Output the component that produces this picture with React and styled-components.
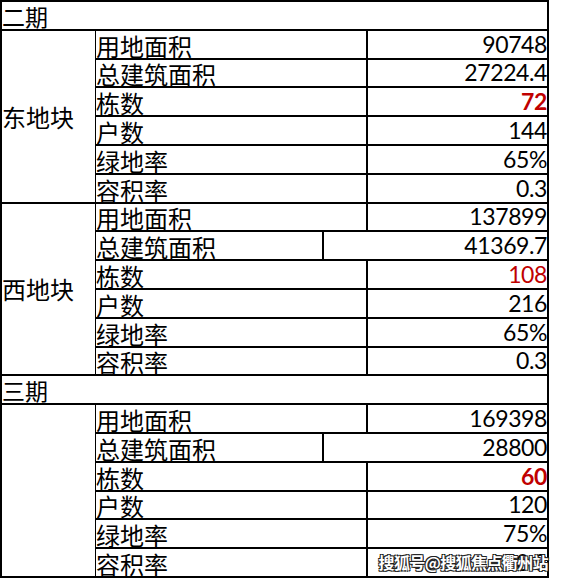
import React from 'react';
import styled, { createGlobalStyle } from 'styled-components';

const GlobalStyle = createGlobalStyle`
    html, body {
        margin: 0;
        padding: 0;
        background: #fff;
    }
`;

const Wrap = styled.div`
    position: relative;
    width: 562px;
    height: 580px;
    background: #fff;
    overflow: hidden;
`;

// black background shows through the gaps as the cell borders
const Grid = styled.div`
    display: grid;
    width: 549px;
    grid-template-columns: 93px 225px 42px 179px;
    grid-template-rows: repeat(20, 26.8px);
    gap: 2px;
    padding: 2px;
    box-sizing: border-box;
    background: #000;
    font-family: "Noto Sans CJK SC", "Noto Sans", sans-serif;
    color: #000;
`;

const Cell = styled.div`
    background: #fff;
    display: flex;
    align-items: flex-end;
    white-space: nowrap;
    min-width: 0;
    font-size: 24px;
    line-height: 25px;
`;

const HeadCell = styled(Cell)`
    grid-column: 1 / -1;
    font-size: 23px;
`;

const BlockCell = styled(Cell)`
    grid-row: span ${p => p.$rows};
    align-items: center;
`;

const LabelCell = styled(Cell)`
    grid-column: span ${p => p.$span};
    margin-left: -1px;
`;

const ValueCell = styled(Cell)`
    grid-column: span ${p => p.$span};
    justify-content: flex-end;
    font-family: "Lato", "Liberation Sans", sans-serif;
    font-weight: ${p => (p.$bold ? 700 : 400)};
    font-size: 23px;
    line-height: 23px;
    padding-bottom: 2px;
    letter-spacing: -0.4px;
    color: ${p => (p.$red ? '#c00000' : '#000')};
`;

const Watermark = styled.span`
    position: absolute;
    right: 14px;
    bottom: 9px;
    font-family: "Noto Sans CJK SC", sans-serif;
    font-size: 16px;
    line-height: 18px;
    font-weight: 700;
    letter-spacing: -0.6px;
    color: #fff;
    text-shadow: 1px 1px 0 #222, -1px -1px 0 #222, 1px -1px 0 #222, -1px 1px 0 #222;
`;

const sections = [
    {
        phase: '二期',
        name: '东地块',
        split: false,
        rows: [
            ['用地面积', '90748'],
            ['总建筑面积', '27224.4'],
            ['栋数', '72', { red: true, bold: true }],
            ['户数', '144'],
            ['绿地率', '65%'],
            ['容积率', '0.3'],
        ],
    },
    {
        name: '西地块',
        split: true,
        rows: [
            ['用地面积', '137899'],
            ['总建筑面积', '41369.7'],
            ['栋数', '108', { red: true }],
            ['户数', '216'],
            ['绿地率', '65%'],
            ['容积率', '0.3'],
        ],
    },
    {
        phase: '三期',
        name: '',
        split: true,
        rows: [
            ['用地面积', '169398'],
            ['总建筑面积', '28800'],
            ['栋数', '60', { red: true, bold: true }],
            ['户数', '120'],
            ['绿地率', '75%'],
            ['容积率', '0.3'],
        ],
    },
];

const Section = ({ section }) => {
    const { phase, name, split, rows } = section;

    return (
        <>
            {phase && <HeadCell>{phase}</HeadCell>}
            <BlockCell $rows={rows.length}>{name}</BlockCell>
            {rows.map(([label, value, opts = {}]) => {
                const narrow = split && label === '总建筑面积';
                return (
                    <React.Fragment key={label}>
                        <LabelCell $span={narrow ? 1 : 2}>{label}</LabelCell>
                        <ValueCell $span={narrow ? 2 : 1} $red={opts.red} $bold={opts.bold}>
                            {value}
                        </ValueCell>
                    </React.Fragment>
                );
            })}
        </>
    );
};

export default function App() {
    return (
        <Wrap>
            <GlobalStyle />
            <Grid>
                {sections.map((s, i) => (
                    <Section key={i} section={s} />
                ))}
            </Grid>
            <Watermark>搜狐号@搜狐焦点衢州站</Watermark>
        </Wrap>
    );
}
